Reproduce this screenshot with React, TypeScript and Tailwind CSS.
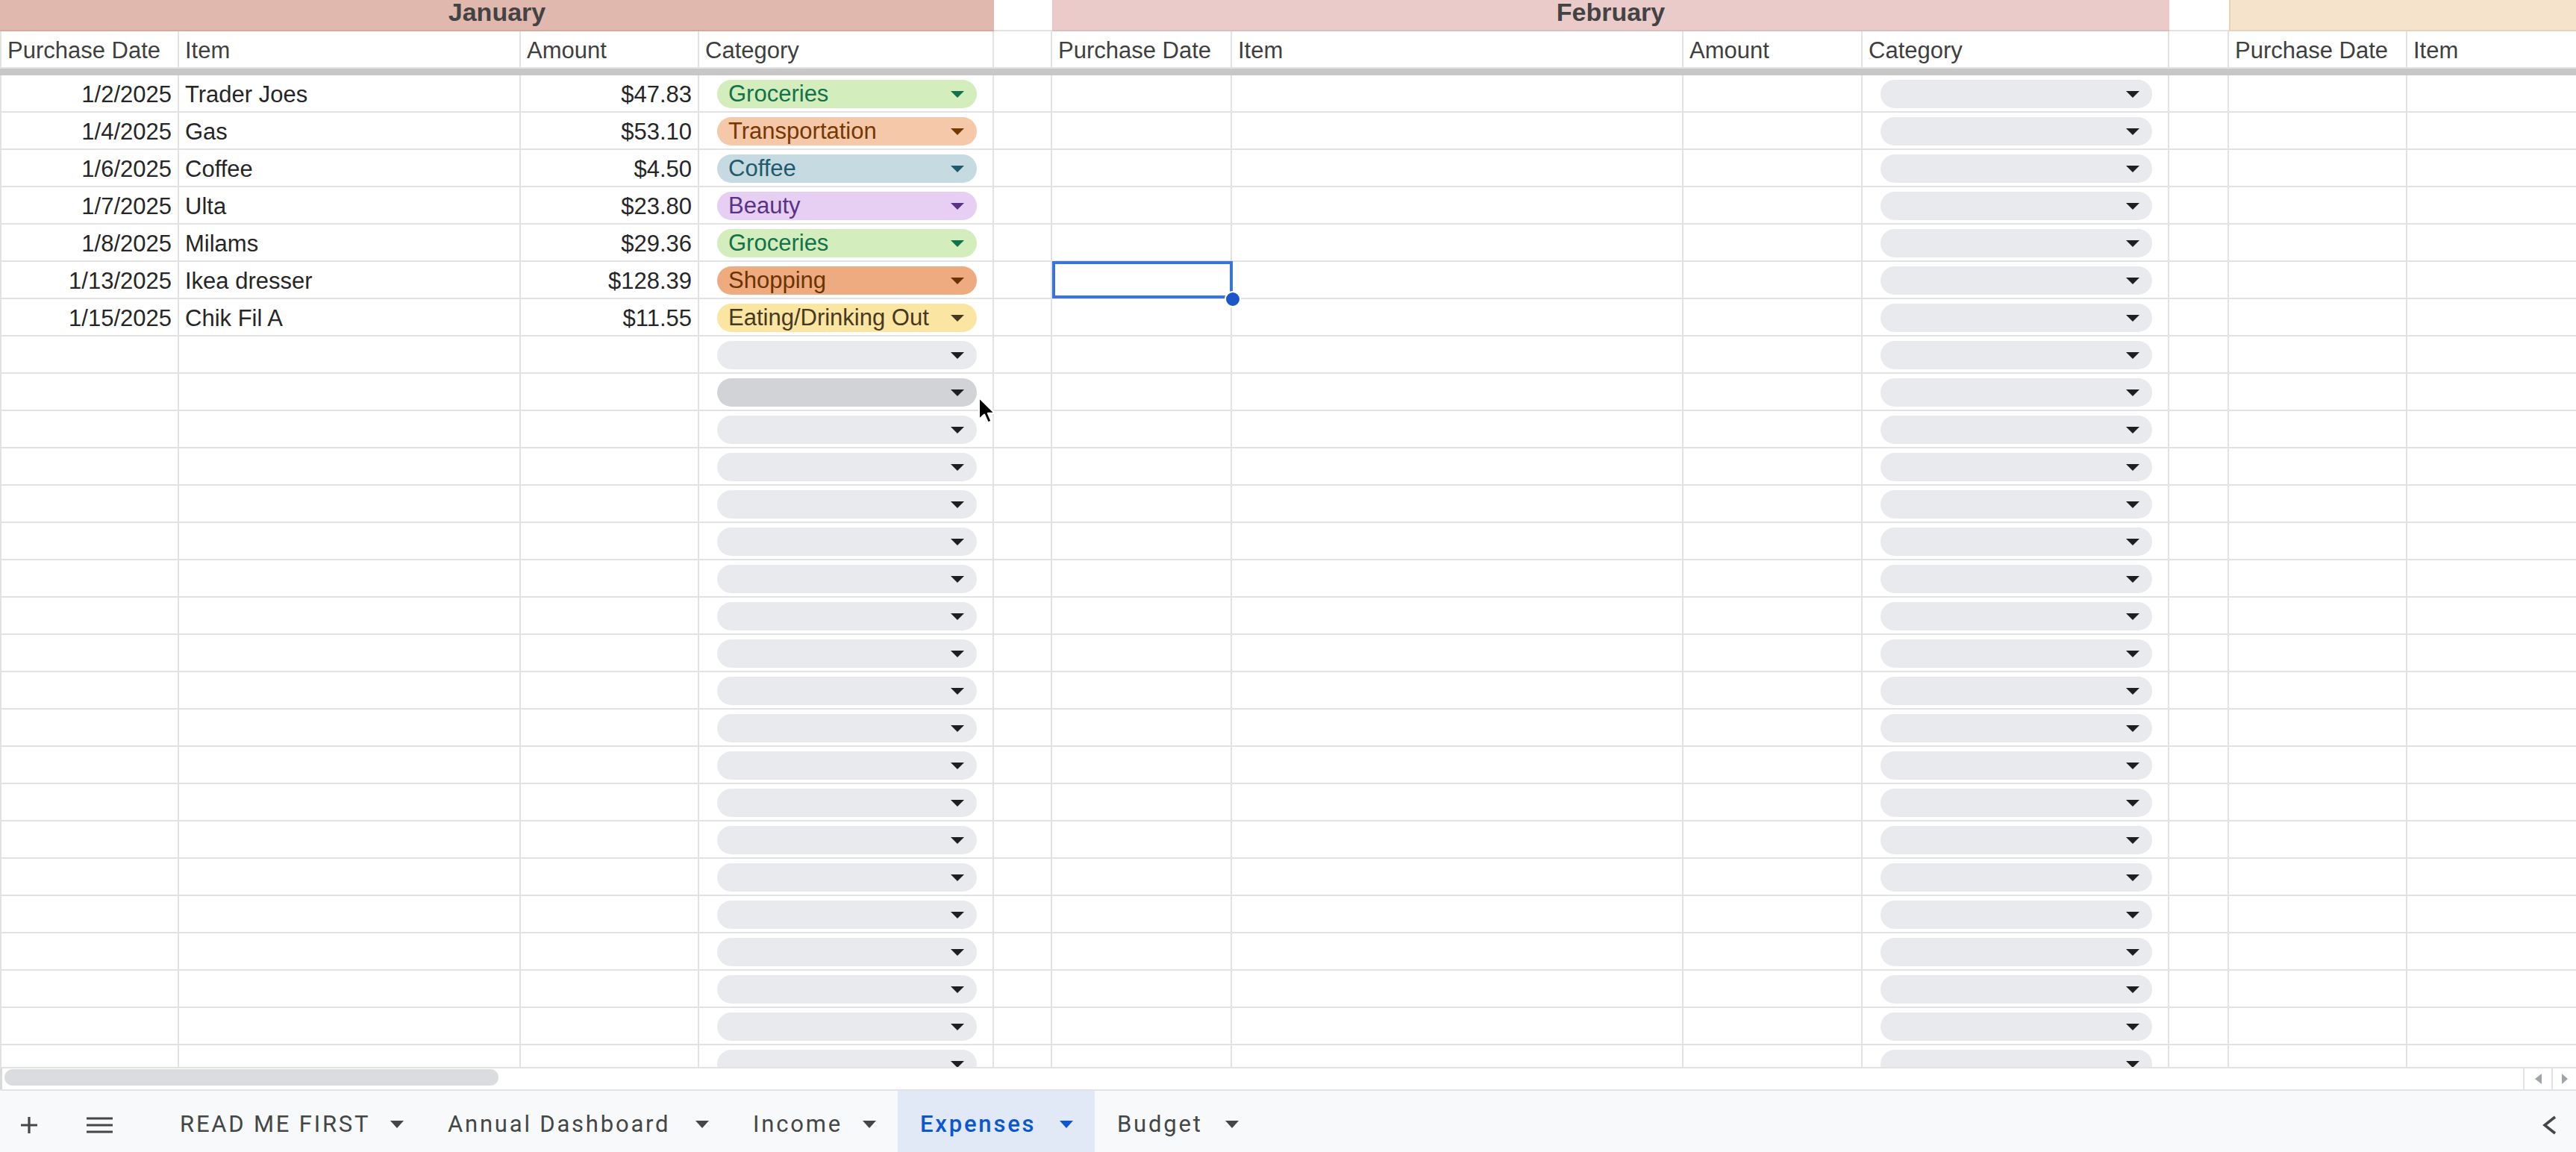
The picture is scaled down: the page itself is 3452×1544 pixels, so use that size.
import { clsx } from 'clsx';

// pill colours, keyed by the category label
const TONES: Record<string, string> = {
  Groceries: 'bg-[#d4edbc] text-[#11734b]',
  Transportation: 'bg-[#f6c8aa] text-[#753800]',
  Coffee: 'bg-[#c6dbe1] text-[#215a6c]',
  Beauty: 'bg-[#e6cff2] text-[#5a3286]',
  Shopping: 'bg-[#efab80] text-[#6b3300]',
  'Eating/Drinking Out': 'bg-[#fbe5a3] text-[#473821]',
};

const janRows = [
  { date: '1/2/2025', item: 'Trader Joes', amount: '$47.83', category: 'Groceries' },
  { date: '1/4/2025', item: 'Gas', amount: '$53.10', category: 'Transportation' },
  { date: '1/6/2025', item: 'Coffee', amount: '$4.50', category: 'Coffee' },
  { date: '1/7/2025', item: 'Ulta', amount: '$23.80', category: 'Beauty' },
  { date: '1/8/2025', item: 'Milams', amount: '$29.36', category: 'Groceries' },
  { date: '1/13/2025', item: 'Ikea dresser', amount: '$128.39', category: 'Shopping' },
  { date: '1/15/2025', item: 'Chik Fil A', amount: '$11.55', category: 'Eating/Drinking Out' },
];

// column widths, right border included (first one also carries the left border)
const COL = [
  'w-[240px] border-l-2',
  'w-[458px]',
  'w-[239px]',
  'w-[395px]',
  'w-[78px]',
  'w-[241px]',
  'w-[605px]',
  'w-[240px]',
  'w-[411px]',
  'w-[80px]',
  'w-[239px]',
  'w-[500px]',
];

const HEADERS = [
  'Purchase Date', 'Item', 'Amount', 'Category', '',
  'Purchase Date', 'Item', 'Amount', 'Category', '',
  'Purchase Date', 'Item',
];

const TABS = [
  { name: 'READ ME FIRST', w: 'w-[359px]' },
  { name: 'Annual Dashboard', w: 'w-[409px]' },
  { name: 'Income', w: 'w-[224px]' },
  { name: 'Expenses', w: 'w-[264px]', active: true },
  { name: 'Budget', w: 'w-[222px]' },
];

function Caret({ w = 18, h = 9 }: { w?: number; h?: number }) {
  return (
    <svg width={w} height={h} viewBox={`0 0 ${w} ${h}`} className="shrink-0">
      <path d={`M0 0H${w}L${w / 2} ${h}Z`} fill="currentColor" />
    </svg>
  );
}

function Cell({
  col,
  right,
  className,
  children,
}: {
  col: number;
  right?: boolean;
  className?: string;
  children?: React.ReactNode;
}) {
  return (
    <div
      className={clsx(
        'flex h-full shrink-0 items-center overflow-hidden whitespace-nowrap border-r-2 border-b-2 border-[#e2e2e2]',
        COL[col],
        right && 'justify-end',
        className ?? 'px-[8px] pt-[5px]'
      )}
    >
      {children}
    </div>
  );
}

function Pill({ label, hover }: { label?: string; hover?: boolean }) {
  const tone = label
    ? TONES[label]
    : hover
      ? 'bg-[#d2d3d6] text-[#1f1f1f]'
      : 'bg-[#e8eaed] text-[#1f1f1f]';
  return (
    <div className={clsx('flex h-[38px] flex-1 items-center rounded-full pl-[15px] pr-[17px]', tone)}>
      <span className="whitespace-nowrap leading-[38px]">{label}</span>
      <span className="ml-auto">
        <Caret />
      </span>
    </div>
  );
}

function CategoryCell({ col, label, hover }: { col: number; label?: string; hover?: boolean }) {
  return (
    <Cell col={col} className="pl-[24px] pr-[21px] pt-[2px]">
      <Pill label={label} hover={hover} />
    </Cell>
  );
}

function Grid() {
  const rows = Array.from({ length: 27 });
  return (
    <div className="relative h-[1430px] shrink-0 overflow-hidden font-['Liberation_Sans',Arial,sans-serif] text-[31px]">
      {/* month bands */}
      <div className="flex h-[42px] w-max">
        <div className="flex h-full w-[1332px] shrink-0 justify-center border-b-2 border-[#d5aa9e] bg-[#e0b8ad]">
          <span className="text-[34px] font-bold leading-[32px] text-[#434343]">January</span>
        </div>
        <div className="h-full w-[78px] shrink-0 border-b-2 border-[#e2e2e2]" />
        <div className="flex h-full w-[1497px] shrink-0 justify-center border-b-2 border-[#dfbcbb] bg-[#ebcbca]">
          <span className="text-[34px] font-bold leading-[32px] text-[#434343]">February</span>
        </div>
        <div className="h-full w-[80px] shrink-0 border-b-2 border-[#e2e2e2]" />
        <div className="h-full w-[600px] shrink-0 border-b-2 border-l-2 border-[#e8d3b8] bg-[#f6e3cb]" />
      </div>

      {/* column headers */}
      <div className="flex h-[50px] w-max text-[#3f3f3f]">
        {HEADERS.map((h, i) => (
          <Cell key={i} col={i}>
            {h}
          </Cell>
        ))}
      </div>

      {/* frozen row divider */}
      <div className="h-[9px] w-full bg-[#c7c7c7]" />

      {rows.map((_, i) => {
        const r = janRows[i];
        return (
          <div key={i} className="flex h-[50px] w-max text-[#262626]">
            <Cell col={0} right>
              {r?.date}
            </Cell>
            <Cell col={1}>{r?.item}</Cell>
            <Cell col={2} right>
              {r?.amount}
            </Cell>
            <CategoryCell col={3} label={r?.category} hover={i === 8} />
            <Cell col={4} />
            <Cell col={5} />
            <Cell col={6} />
            <Cell col={7} />
            <CategoryCell col={8} />
            <Cell col={9} />
            <Cell col={10} />
            <Cell col={11} />
          </div>
        );
      })}

      {/* selected cell */}
      <div className="pointer-events-none absolute left-[1410px] top-[350px] h-[50px] w-[242px] border-4 border-[#3b74d9]" />
      <div className="pointer-events-none absolute left-[1641px] top-[390px] h-[22px] w-[22px] rounded-full border-2 border-white bg-[#1d56c8]" />

      {/* mouse pointer */}
      <svg
        className="pointer-events-none absolute left-[1310px] top-[531px]"
        width="26"
        height="40"
        viewBox="0 0 26 40"
      >
        <path
          d="M2 2L2 31L9 24.5L14 35.5L18.5 33.5L13.8 22.8L23 22.8Z"
          fill="#000"
          stroke="#fff"
          strokeWidth="2"
          strokeLinejoin="round"
        />
      </svg>
    </div>
  );
}

function ScrollArea() {
  return (
    <div className="flex h-[30px] shrink-0 border-t-2 border-[#e2e2e2] bg-white">
      <div className="border-l-[3px] border-[#dadada] pl-[3px] pt-[1px]">
        <div className="h-[22px] w-[662px] rounded-full bg-[#dadce0]" />
      </div>
      <div className="ml-auto flex h-full text-[#a0a4a8]">
        <div className="flex w-[38px] items-center justify-center border-l-2 border-[#e2e2e2]">
          <svg width="9" height="14" viewBox="0 0 9 14">
            <path d="M9 0V14L0 7Z" fill="currentColor" />
          </svg>
        </div>
        <div className="flex w-[33px] items-center justify-center border-l-2 border-[#e2e2e2]">
          <svg width="8" height="14" viewBox="0 0 8 14">
            <path d="M0 0V14L8 7Z" fill="currentColor" />
          </svg>
        </div>
      </div>
    </div>
  );
}

function SheetTabs() {
  return (
    <div className="flex h-[84px] shrink-0 border-t-2 border-[#e3e3e3] bg-[#f8f9fa] font-['Roboto',sans-serif] text-[31px] text-[#444746]">
      <div className="flex w-[78px] shrink-0 items-center justify-center pt-[9px]">
        <svg width="24" height="24" viewBox="0 0 24 24">
          <path d="M12 1V23M1 12H23" stroke="currentColor" strokeWidth="3.2" />
        </svg>
      </div>
      <div className="flex w-[133px] shrink-0 items-center pl-[38px] pt-[9px]">
        <svg width="35" height="22" viewBox="0 0 35 22">
          <path d="M0 2H35M0 11H35M0 20H35" stroke="currentColor" strokeWidth="3.2" />
        </svg>
      </div>

      {TABS.map((t) => (
        <div
          key={t.name}
          className={clsx(
            'flex h-full shrink-0 items-center pl-[30px] pr-[29px] pt-[7px]',
            t.w,
            t.active && 'bg-[#e1e9f7] font-medium text-[#0b57d0]'
          )}
        >
          <span className="whitespace-nowrap leading-[30px] tracking-[2.8px]">{t.name}</span>
          <span className="ml-auto">
            <Caret w={18} h={10} />
          </span>
        </div>
      ))}

      <div className="ml-auto flex w-[45px] shrink-0 items-center pt-[9px]">
        <svg width="20" height="26" viewBox="0 0 20 26">
          <path d="M17 2L3 13L17 24" fill="none" stroke="currentColor" strokeWidth="3.5" />
        </svg>
      </div>
    </div>
  );
}

export default function App() {
  return (
    <div className="flex h-[1544px] w-[3452px] flex-col overflow-hidden bg-white">
      <Grid />
      <ScrollArea />
      <SheetTabs />
    </div>
  );
}
